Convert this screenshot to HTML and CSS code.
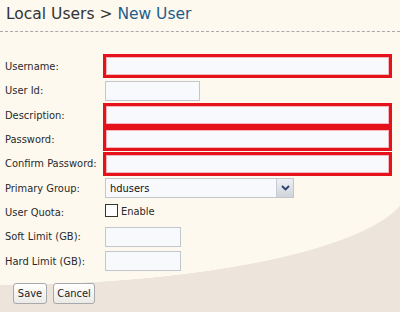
FILE: index.html
```html
<!DOCTYPE html>
<html>
<head>
<meta charset="utf-8">
<link rel="stylesheet" href="styles.css">
</head>
<body>
<div class="page">
  <div class="header">
    <h1 class="title">Local Users <span class="sep">&gt;</span> <span class="current">New User</span></h1>
  </div>
  <form class="form">
    <label class="lbl">Username:</label>
    <div class="field"><input class="inp wide error" type="text"></div>
    <label class="lbl">User Id:</label>
    <div class="field"><input class="inp mid" type="text"></div>
    <label class="lbl">Description:</label>
    <div class="field"><input class="inp wide error" type="text"></div>
    <label class="lbl">Password:</label>
    <div class="field"><input class="inp wide error" type="password"></div>
    <label class="lbl">Confirm Password:</label>
    <div class="field"><input class="inp wide error" type="password"></div>
    <label class="lbl">Primary Group:</label>
    <div class="field">
      <div class="select">
        <span class="select-text">hdusers</span>
        <span class="select-btn">
          <svg width="9" height="6" viewBox="0 0 9 6"><path d="M1 1 L4.5 4.5 L8 1" fill="none" stroke="#2b3f6b" stroke-width="1.8"/></svg>
        </span>
      </div>
    </div>
    <label class="lbl">User Quota:</label>
    <div class="field check-field"><span class="checkbox"></span><span class="check-label">Enable</span></div>
    <label class="lbl">Soft Limit (GB):</label>
    <div class="field"><input class="inp small" type="text"></div>
    <label class="lbl">Hard Limit (GB):</label>
    <div class="field"><input class="inp small" type="text"></div>
  </form>
  <div class="actions">
    <button class="btn btn-save" type="button">Save</button>
    <button class="btn btn-cancel" type="button">Cancel</button>
  </div>
</div>
</body>
</html>
```
FILE: styles.css
```css
html, body {
  margin: 0;
  padding: 0;
  width: 400px;
  height: 312px;
  overflow: hidden;
}
body {
  font-family: "DejaVu Sans Condensed", "DejaVu Sans", Verdana, sans-serif;
  font-size: 11px;
  color: #2a2a2a;
  background:
    linear-gradient(to bottom, #fdf9ef 185px, transparent 185px),
    radial-gradient(410px 100px at 0 185px, #fdf9ef 99.5%, #ede5dc 100%);
}
.page {
  display: flex;
  flex-direction: column;
}
.header {
  height: 32px;
  border-bottom: 1px dashed #a9a9a9;
  box-sizing: border-box;
  padding: 4px 0 0 6px;
}
.title {
  margin: 0;
  font-family: "DejaVu Sans", Verdana, sans-serif;
  font-size: 15.5px;
  font-weight: normal;
  color: #333;
  line-height: 20px;
}
.current {
  color: #1f5d8c;
}
.form {
  margin: 22px 0 0 0;
  display: grid;
  grid-template-columns: 103px 1fr;
  grid-template-rows: 24px 25px 24px 24px 25px 24px 24px 25px 24px;
}
.lbl {
  display: flex;
  align-items: center;
  padding-left: 5px;
  white-space: nowrap;
}
.field {
  display: flex;
  align-items: center;
}
.inp {
  box-sizing: border-box;
  margin: 0;
  padding: 0 3px;
  font: inherit;
  background: #f8f9fd;
  border: 1px solid #c3c6cc;
  height: 20px;
}
.inp.mid {
  margin-left: 2px;
  width: 95px;
}
.inp.small {
  margin-left: 2px;
  width: 76px;
}
.inp.wide {
  width: 289px;
  height: 24px;
}
.inp.error {
  border: 3px solid #e5121b;
  box-shadow: inset 0 0 0 1px #f4b6b8;
}
.select {
  margin-left: 2px;
  width: 189px;
  height: 20px;
  box-sizing: border-box;
  border: 1px solid #c3c6cc;
  background: #f8f9fd;
  display: flex;
  align-items: center;
  justify-content: space-between;
}
.select-text {
  padding-left: 4px;
  color: #111;
}
.select-btn {
  width: 16px;
  height: 18px;
  display: flex;
  align-items: center;
  justify-content: center;
  background: linear-gradient(to bottom, #eef0f4, #cfd3db);
  border-left: 1px solid #c9ccd3;
}
.check-field {
  padding-left: 2px;
  gap: 3px;
  align-items: center;
}
.checkbox {
  width: 11px;
  height: 11px;
  border: 1px solid #333;
  background: #fdfdfd;
  margin-top: -3px;
}
.check-label {
  color: #2a2a2a;
  margin-top: -2px;
}
.actions {
  display: flex;
  gap: 6px;
  padding: 10px 0 0 13px;
}
.btn {
  font: inherit;
  color: #222;
  height: 21px;
  padding: 0;
  border: 1px solid #a7a9ad;
  border-radius: 3px;
  background: linear-gradient(to bottom, #ffffff, #eceae6);
  margin: 0;
}
.btn-save {
  width: 34px;
}
.btn-cancel {
  width: 42px;
}
```
